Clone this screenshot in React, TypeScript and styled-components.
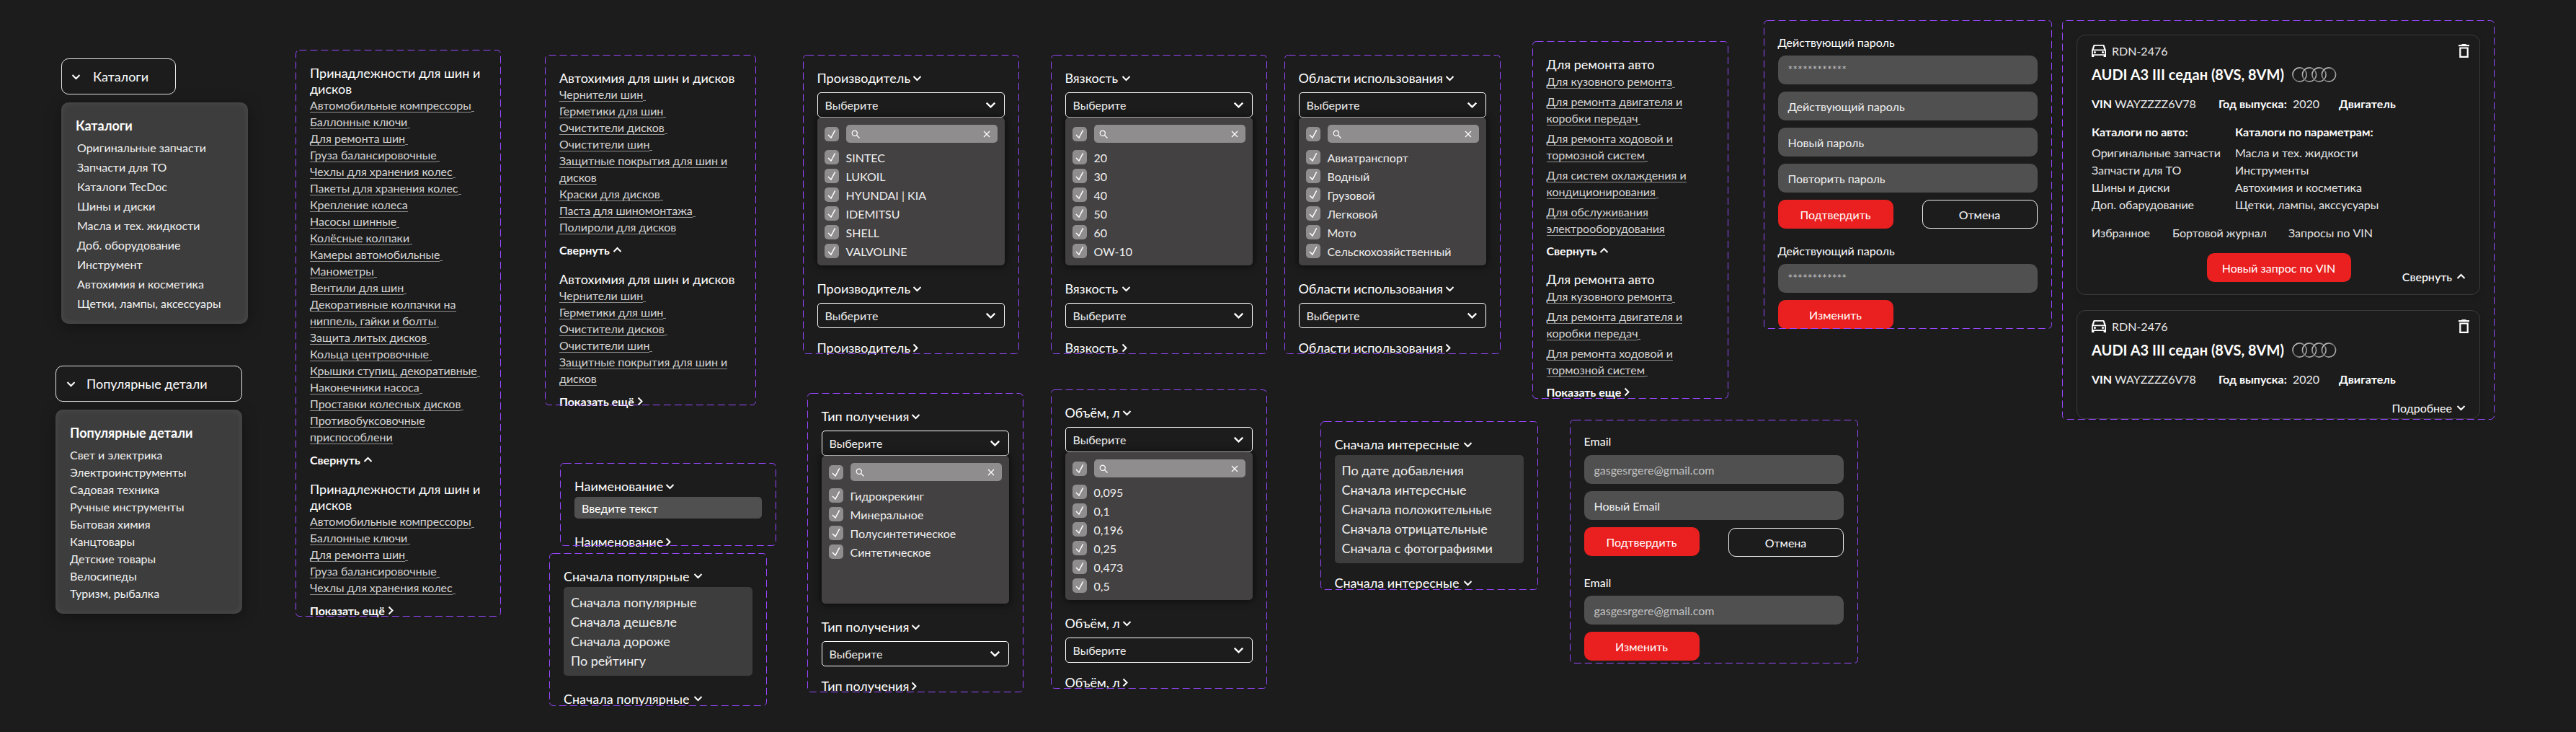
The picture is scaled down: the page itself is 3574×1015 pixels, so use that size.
import React from 'react';
import styled, { createGlobalStyle } from 'styled-components';

const GlobalStyle = createGlobalStyle`
  * { box-sizing: border-box; }
  html, body { margin: 0; padding: 0; background: #1c1c1c; }
  body {
    width: 3574px;
    height: 1015px;
    overflow: hidden;
    color: #fff;
    font-family: Lato, 'Open Sans', sans-serif;
    font-size: 16px;
  }
`;

const Board = styled.div`
  display: flex;
  align-items: flex-start;
  height: 1015px;
  padding-left: 77px;
`;

const Column = styled.div<{ $w: number }>`
  flex: none;
  width: ${(p) => p.$w}px;
  display: flex;
  flex-direction: column;
  align-items: flex-start;
`;

const Frame = styled.div<{ $w: number; $h: number; $top: number; $indent?: number; $padTop?: number }>`
  position: relative;
  flex: none;
  width: ${(p) => p.$w}px;
  height: ${(p) => p.$h}px;
  margin-top: ${(p) => p.$top}px;
  margin-left: ${(p) => p.$indent ?? 0}px;
  padding: ${(p) => p.$padTop ?? 21}px 20px 0;
`;

const Outline = styled.svg`
  position: absolute;
  inset: 0;
  width: 100%;
  height: 100%;
  pointer-events: none;
  overflow: visible;
`;

const OutlineRect = styled.rect`
  x: 0.5px;
  y: 0.5px;
  width: calc(100% - 1px);
  height: calc(100% - 1px);
  rx: 5px;
  fill: none;
  stroke: #9747ff;
  stroke-width: 1;
  stroke-dasharray: 10 5;
`;

const DashedFrame = (props: React.ComponentProps<typeof Frame>) => (
  <Frame {...props}>
    <Outline>
      <OutlineRect />
    </Outline>
    {props.children}
  </Frame>
);

const ChevronIcon = styled.svg<{ $size?: number }>`
  flex: none;
  width: ${(p) => p.$size ?? 13}px;
  height: ${(p) => p.$size ?? 13}px;
`;

const chevronPaths = {
  down: 'M1.5 4l5 5 5-5',
  up: 'M1.5 9l5-5 5 5',
  right: 'M1.5 1.5l5 5-5 5',
};

const Chevron = ({ dir = 'down', size }: { dir?: keyof typeof chevronPaths; size?: number }) => (
  <ChevronIcon viewBox="0 0 13 13" $size={size} fill="none" stroke="#fff" strokeWidth="2">
    <path d={chevronPaths[dir]} />
  </ChevronIcon>
);

/* Left column: catalog buttons and their menus */

const MenuButton = styled.div<{ $w: number; $indent?: number; $top: number; $gap: number; $pad: number }>`
  width: ${(p) => p.$w}px;
  height: 50px;
  margin-top: ${(p) => p.$top}px;
  margin-left: ${(p) => p.$indent ?? 0}px;
  padding-left: ${(p) => p.$pad}px;
  display: flex;
  align-items: center;
  gap: ${(p) => p.$gap}px;
  border: 1px solid #e4e4e4;
  border-radius: 10px;
  font-size: 18px;
`;

const MenuPanel = styled.div<{ $indent?: number; $padBottom: number }>`
  width: 259px;
  margin-top: 11px;
  margin-left: ${(p) => p.$indent ?? 0}px;
  padding: 21px 19px ${(p) => p.$padBottom}px 20px;
  border-radius: 10px;
  background: #3d3d3d;
  box-shadow: inset 0 0 10px rgba(255, 255, 255, 0.09), 0 4px 20px rgba(0, 0, 0, 0.35);
`;

const MenuTitle = styled.div<{ $mb: number }>`
  font-size: 18px;
  font-weight: 700;
  line-height: 22px;
  margin-bottom: ${(p) => p.$mb}px;
`;

const MenuItem = styled.div<{ $lh: number; $indent?: number }>`
  line-height: ${(p) => p.$lh}px;
  padding-left: ${(p) => p.$indent ?? 0}px;
  color: #f2f2f2;
  white-space: nowrap;
`;

/* Link lists */

const GroupTitle = styled.div<{ $mb?: number }>`
  font-size: 18px;
  line-height: 22px;
  margin-bottom: ${(p) => p.$mb ?? 0}px;
`;

const LinkRow = styled.div<{ $tail: boolean; $gap?: number }>`
  line-height: 23px;
  margin-bottom: ${(p) => p.$gap ?? 0}px;
  color: #d4d4d4;

  ${(p) =>
    p.$tail &&
    `&::after {
      content: '';
      display: inline-block;
      width: 4px;
      height: 1px;
      background: #8f8f8f;
      vertical-align: -3px;
    }`}
`;

const LinkText = styled.span`
  border-bottom: 1px solid #8f8f8f;
`;

const Toggle = styled.div<{ $top: number; $after?: number }>`
  display: flex;
  align-items: center;
  gap: 4px;
  height: 20px;
  margin-top: ${(p) => p.$top}px;
  margin-bottom: ${(p) => p.$after ?? 0}px;
  font-weight: 700;
  white-space: nowrap;
`;

const noTail = new Set([
  'Крепление колеса',
  'Противобуксовочные приспособлени',
  'Полироли для дисков',
  'Защитные покрытия для шин и дисков',
  'Для обслуживания электрооборудования',
]);

const LinkGroup = ({ title, links, gap, toggle }: { title: string; links: string[]; gap?: number; toggle: 'up' | 'more' | 'moreAlt' }) => (
  <>
    <GroupTitle $mb={gap ? 1 : 0}>{title}</GroupTitle>
    {links.map((link, i) => (
      <LinkRow key={i} $tail={!noTail.has(link)} $gap={gap}>
        <LinkText>{link}</LinkText>
      </LinkRow>
    ))}
    {toggle === 'up' ? (
      <Toggle $after={gap ? 19 : 20} $top={gap ? 9 : 10}>
        Свернуть <Chevron dir="up" />
      </Toggle>
    ) : (
      <Toggle $top={gap ? 9 : 10}>
        {toggle === 'more' ? 'Показать ещё' : 'Показать еще'} <Chevron dir="right" />
      </Toggle>
    )}
  </>
);

/* Filter fields */

const FieldLabel = styled.div<{ $top?: number; $gap?: number; $mb?: number }>`
  display: flex;
  align-items: center;
  gap: ${(p) => p.$gap ?? 3}px;
  height: 22px;
  margin-top: ${(p) => p.$top ?? 0}px;
  margin-bottom: ${(p) => p.$mb ?? 0}px;
  font-size: 18px;
  white-space: nowrap;
`;

const SelectBox = styled.div`
  display: flex;
  align-items: center;
  justify-content: space-between;
  width: 260px;
  height: 35px;
  padding: 0 11px 0 10px;
  border: 1px solid #fff;
  border-radius: 5px;
  color: #eee;
`;

const Dropdown = styled.div`
  width: 260px;
  height: 205px;
  padding: 10px;
  border-radius: 5px;
  background: #434142;
  box-shadow: 0 0 12px rgba(0, 0, 0, 0.75);
`;

const SearchRow = styled.div`
  display: flex;
  align-items: center;
  gap: 10px;
  margin-bottom: 10px;
`;

const SearchField = styled.div`
  flex: 1;
  height: 25px;
  display: flex;
  align-items: center;
  justify-content: space-between;
  padding: 0 10px 0 7px;
  border-radius: 5px;
  background: #8f8d8e;
`;

const CheckBox = styled.div`
  flex: none;
  width: 20px;
  height: 20px;
  border-radius: 5px;
  background: #8f8d8e;
  display: flex;
`;

const OptionRow = styled.div`
  display: flex;
  align-items: center;
  gap: 10px;
  height: 20px;
  margin-bottom: 6px;
  color: #f0f0f0;
  white-space: nowrap;
`;

const Check = () => (
  <CheckBox>
    <svg viewBox="0 0 20 20" width="20" height="20" fill="none" stroke="#fff" strokeWidth="1.5">
      <path d="M5 11l4 4 5.7-10.7" />
    </svg>
  </CheckBox>
);

const SelectFrame = ({ title, options, top, gap, indent }: { title: string; options: string[]; top: number; gap?: number; indent?: number }) => (
  <DashedFrame $w={300} $h={415} $top={top} $indent={indent}>
    <FieldLabel $gap={gap} $mb={9}>
      {title} <Chevron />
    </FieldLabel>
    <SelectBox>
      Выберите <Chevron size={15} />
    </SelectBox>
    <Dropdown>
      <SearchRow>
        <Check />
        <SearchField>
          <svg viewBox="0 0 12 12" width="12" height="12" fill="none" stroke="#fff" strokeWidth="1.2">
            <circle cx="4.8" cy="4.8" r="3.6" />
            <path d="M7.5 7.5l4 4" />
          </svg>
          <svg viewBox="0 0 10 10" width="10" height="10" fill="none" stroke="#fff" strokeWidth="1.3">
            <path d="M1 1l8 8M9 1l-8 8" />
          </svg>
        </SearchField>
      </SearchRow>
      {options.map((o) => (
        <OptionRow key={o}>
          <Check />
          {o}
        </OptionRow>
      ))}
    </Dropdown>
    <FieldLabel $top={21} $gap={gap} $mb={9}>
      {title} <Chevron />
    </FieldLabel>
    <SelectBox>
      Выберите <Chevron size={15} />
    </SelectBox>
    <FieldLabel $top={16} $gap={gap}>
      {title} <Chevron dir="right" />
    </FieldLabel>
  </DashedFrame>
);

const TextInput = styled.div`
  height: 30px;
  width: 260px;
  margin-top: 4px;
  padding: 0 10px;
  display: flex;
  align-items: center;
  border-radius: 5px;
  background: #505050;
`;

const SortPanel = styled.div`
  width: 262px;
  margin-top: 4px;
  padding: 8px 10px 7px;
  border-radius: 5px;
  background: #3d3d3d;
`;

const SortItem = styled.div`
  font-size: 18px;
  line-height: 27px;
  color: #f0f0f0;
  white-space: nowrap;
`;

/* Password and email forms */

const FormLabel = styled.div<{ $top?: number; $mb: number }>`
  line-height: 20px;
  margin-top: ${(p) => p.$top ?? 0}px;
  margin-bottom: ${(p) => p.$mb}px;
`;

const FormInput = styled.div<{ $muted?: boolean; $stars?: boolean }>`
  height: 40px;
  margin-bottom: 10px;
  padding: 0 14px;
  display: flex;
  align-items: ${(p) => (p.$stars ? 'flex-start' : 'center')};
  padding-top: ${(p) => (p.$stars ? '9px' : '0')};
  border-radius: 10px;
  background: #505050;
  color: ${(p) => (p.$muted ? '#c2c2c2' : '#f0f0f0')};
`;

const ButtonRow = styled.div`
  display: flex;
  justify-content: space-between;
  align-items: flex-start;
`;

const RedButton = styled.div<{ $w?: number }>`
  width: ${(p) => p.$w ?? 160}px;
  height: 40px;
  display: flex;
  align-items: center;
  justify-content: center;
  border-radius: 10px;
  background: #ea2020;
`;

const GhostButton = styled.div<{ $drop?: number }>`
  width: 160px;
  height: 40px;
  margin-top: ${(p) => p.$drop ?? 0}px;
  display: flex;
  align-items: center;
  justify-content: center;
  border: 1px solid #f0f0f0;
  border-radius: 10px;
`;

/* VIN cards */

const Card = styled.div<{ $h?: number; $mt?: number }>`
  height: ${(p) => p.$h}px;
  margin-top: ${(p) => p.$mt ?? 0}px;
  padding: 9px 14px 0 20px;
  border: 1px solid #3a3a3a;
  border-radius: 12px;
  box-shadow: 0 4px 10px rgba(0, 0, 0, 0.12);
`;

const CardHead = styled.div`
  display: flex;
  align-items: center;
  justify-content: space-between;
  height: 24px;
`;

const PlateRow = styled.div`
  display: flex;
  align-items: center;
  gap: 8px;
  color: #e8e8e8;
`;

const TitleRow = styled.div`
  display: flex;
  align-items: center;
  gap: 11px;
  height: 24px;
  margin-top: 9px;
  font-size: 20px;
  font-weight: 700;
`;

const VinRow = styled.div`
  display: flex;
  margin-top: 19px;
  line-height: 20px;
  white-space: nowrap;
`;

const VinCell = styled.div<{ $w: number }>`
  width: ${(p) => p.$w}px;
  flex: none;
  color: #ececec;

  b {
    color: #fff;
  }
`;

const CatalogGrid = styled.div`
  display: grid;
  grid-template-columns: 199px 1fr;
  margin-top: 19px;
`;

const CatalogHead = styled.div`
  font-weight: 700;
  line-height: 20px;
  margin-bottom: 7px;
`;

const CatalogItem = styled.div`
  line-height: 24px;
  color: #e6e6e6;
`;

const ShortcutRow = styled.div`
  display: flex;
  margin-top: 17px;
  line-height: 20px;
  color: #e6e6e6;
`;

const Shortcut = styled.div<{ $w?: number }>`
  width: ${(p) => (p.$w ? `${p.$w}px` : 'auto')};
`;

const CardFooter = styled.div`
  display: grid;
  grid-template-columns: 1fr auto 1fr;
  margin-top: 18px;
  margin-right: 5px;
`;

const FooterButton = styled(RedButton)`
  grid-column: 2;
`;

const CardToggle = styled.div<{ $bold?: boolean; $top?: number }>`
  grid-column: 3;
  justify-self: end;
  align-self: end;
  display: flex;
  align-items: center;
  justify-content: flex-end;
  gap: 6px;
  height: 16px;
  margin-top: ${(p) => p.$top ?? 0}px;
  font-weight: ${(p) => (p.$bold ? 500 : 400)};
  white-space: nowrap;
`;

const CarIcon = () => (
  <svg viewBox="0 0 19 16" width="20" height="17" fill="#fff">
    <path
      fillRule="evenodd"
      d="M3.6 0h11.8c.7 0 1.3.4 1.5 1.1L19 7.2V16h-3.2v-1.8H3.2V16H0V7.2l2.1-6.1C2.3.4 2.9 0 3.6 0zm.4 1.7L2.6 6h13.8L15 1.7H4zM1.7 7.7v4.8h15.6V7.7H1.7zM4.2 8.4a1.5 1.5 0 110 3 1.5 1.5 0 010-3zm10.6 0a1.5 1.5 0 110 3 1.5 1.5 0 010-3z"
    />
  </svg>
);

const TrashIcon = () => (
  <svg viewBox="0 0 15 19" width="15" height="19" fill="#fff">
    <path
      fillRule="evenodd"
      d="M5 0h5l1 1h4v2.2H0V1h4L5 0zM1.2 4.4h12.6V19H1.2V4.4zm2.2 2.2v10.2h8.2V6.6H3.4z"
    />
  </svg>
);

const AudiRings = () => (
  <svg viewBox="0 0 62 21" width="62" height="21" fill="none" strokeWidth="1.6">
    <defs>
      <linearGradient id="ring" x1="0" y1="0" x2="1" y2="1">
        <stop offset="0" stopColor="#e8e8e8" />
        <stop offset="0.5" stopColor="#6c6c6c" />
        <stop offset="1" stopColor="#d8d8d8" />
      </linearGradient>
    </defs>
    {[10.5, 24, 37.5, 51].map((cx) => (
      <circle key={cx} cx={cx} cy="10.5" r="9.6" stroke="url(#ring)" />
    ))}
  </svg>
);

const CardTop = () => (
  <>
    <CardHead>
      <PlateRow>
        <CarIcon />
        RDN-2476
      </PlateRow>
      <TrashIcon />
    </CardHead>
    <TitleRow>
      AUDI A3 III седан (8VS, 8VM) <AudiRings />
    </TitleRow>
    <VinRow>
      <VinCell $w={176}>
        <b>VIN</b> WAYZZZZ6V78
      </VinCell>
      <VinCell $w={167}>
        <b>Год выпуска:</b>&nbsp; 2020
      </VinCell>
      <VinCell $w={100}>
        <b>Двигатель</b>
      </VinCell>
    </VinRow>
  </>
);

const tireLinks = [
  'Автомобильные компрессоры',
  'Баллонные ключи',
  'Для ремонта шин',
  'Груза балансировочные',
  'Чехлы для хранения колес',
];

const tireLinksFull = [
  ...tireLinks,
  'Пакеты для хранения колес',
  'Крепление колеса',
  'Насосы шинные',
  'Колёсные колпаки',
  'Камеры автомобильные',
  'Манометры',
  'Вентили для шин',
  'Декоративные колпачки на ниппель, гайки и болты',
  'Защита литых дисков',
  'Кольца центровочные',
  'Крышки ступиц, декоративные',
  'Наконечники насоса',
  'Проставки колесных дисков',
  'Противобуксовочные приспособлени',
];

const chemLinks = [
  'Чернители шин',
  'Герметики для шин',
  'Очистители дисков',
  'Очистители шин',
  'Защитные покрытия для шин и дисков',
];

const repairLinks = [
  'Для кузовного ремонта',
  'Для ремонта двигателя и коробки передач',
  'Для ремонта ходовой и тормозной систем',
];

const catalogItems = [
  'Оригинальные запчасти',
  'Запчасти для ТО',
  'Каталоги TecDoc',
  'Шины и диски',
  'Масла и тех. жидкости',
  'Доб. оборудование',
  'Инструмент',
  'Автохимия и косметика',
  'Щетки, лампы, аксессуары',
];

const popularItems = [
  'Свет и электрика',
  'Электроинструменты',
  'Садовая техника',
  'Ручные инструменты',
  'Бытовая химия',
  'Канцтовары',
  'Детские товары',
  'Велосипеды',
  'Туризм, рыбалка',
];

const App = () => (
  <>
    <GlobalStyle />
    <Board>
      <Column $w={333}>
        <MenuButton $w={159} $indent={8} $top={81} $gap={17} $pad={13}>
          <Chevron />
          Каталоги
        </MenuButton>
        <MenuPanel $indent={8} $padBottom={15}>
          <MenuTitle $mb={6}>Каталоги</MenuTitle>
          {catalogItems.map((item) => (
            <MenuItem key={item} $lh={27} $indent={2}>
              {item}
            </MenuItem>
          ))}
        </MenuPanel>
        <MenuButton $w={259} $top={58} $gap={15} $pad={14}>
          <Chevron />
          Популярные детали
        </MenuButton>
        <MenuPanel $padBottom={16}>
          <MenuTitle $mb={8}>Популярные детали</MenuTitle>
          {popularItems.map((item) => (
            <MenuItem key={item} $lh={24}>
              {item}
            </MenuItem>
          ))}
        </MenuPanel>
      </Column>

      <Column $w={346}>
        <DashedFrame $w={285} $h={786} $top={69}>
          <LinkGroup title="Принадлежности для шин и дисков" links={tireLinksFull} toggle="up" />
          <LinkGroup title="Принадлежности для шин и дисков" links={tireLinks} toggle="more" />
        </DashedFrame>
      </Column>

      <Column $w={357.5}>
        <DashedFrame $w={293} $h={486} $top={76}>
          <LinkGroup
            title="Автохимия для шин и дисков"
            links={[...chemLinks, 'Краски для дисков', 'Паста для шиномонтажа', 'Полироли для дисков']}
            toggle="up"
          />
          <LinkGroup title="Автохимия для шин и дисков" links={chemLinks} toggle="more" />
        </DashedFrame>
        <DashedFrame $w={300} $h={115} $top={80} $indent={21}>
          <FieldLabel>
            Наименование <Chevron />
          </FieldLabel>
          <TextInput>Введите текст</TextInput>
          <FieldLabel $top={21}>
            Наименование <Chevron dir="right" />
          </FieldLabel>
        </DashedFrame>
        <DashedFrame $w={302} $h={212} $top={9.5} $indent={6}>
          <FieldLabel $gap={6}>
            Сначала популярные <Chevron />
          </FieldLabel>
          <SortPanel>
            {['Сначала популярные', 'Сначала дешевле', 'Сначала дороже', 'По рейтингу'].map((s) => (
              <SortItem key={s}>{s}</SortItem>
            ))}
          </SortPanel>
          <FieldLabel $top={21} $gap={6}>
            Сначала популярные <Chevron />
          </FieldLabel>
        </DashedFrame>
      </Column>

      <Column $w={344}>
        <SelectFrame
          title="Производитель"
          top={76}
          options={['SINTEC', 'LUKOIL', 'HYUNDAI | KIA', 'IDEMITSU', 'SHELL', 'VALVOLINE']}
        />
        <SelectFrame
          title="Тип получения"
          top={54}
          indent={6}
          options={['Гидрокрекинг', 'Минеральное', 'Полусинтетическое', 'Синтетическое']}
        />
      </Column>

      <Column $w={324}>
        <SelectFrame title="Вязкость" top={76} gap={5} options={['20', '30', '40', '50', '60', 'OW-10']} />
        <SelectFrame
          title="Объём, л"
          top={49}
          options={['0,095', '0,1', '0,196', '0,25', '0,473', '0,5']}
        />
      </Column>

      <Column $w={344}>
        <SelectFrame
          title="Области использования"
          top={76}
          options={['Авиатранспорт', 'Водный', 'Грузовой', 'Легковой', 'Мото', 'Сельскохозяйственный']}
        />
        <DashedFrame $w={302} $h={234} $top={93} $indent={50}>
          <FieldLabel $gap={6}>
            Сначала интересные <Chevron />
          </FieldLabel>
          <SortPanel>
            {['По дате добавления', 'Сначала интересные', 'Сначала положительные', 'Сначала отрицательные', 'Сначала с фотографиями'].map(
              (s) => (
                <SortItem key={s}>{s}</SortItem>
              ),
            )}
          </SortPanel>
          <FieldLabel $top={16} $gap={6}>
            Сначала интересные <Chevron />
          </FieldLabel>
        </DashedFrame>
      </Column>

      <Column $w={321}>
        <DashedFrame $w={272} $h={496} $top={57}>
          <LinkGroup
            title="Для ремонта авто"
            gap={5}
            links={[...repairLinks, 'Для систем охлаждения и кондиционирования', 'Для обслуживания электрооборудования']}
            toggle="up"
          />
          <LinkGroup title="Для ремонта авто" gap={5} links={repairLinks} toggle="moreAlt" />
        </DashedFrame>
        <DashedFrame $w={400} $h={338} $top={29} $indent={52} $padTop={20}>
          <FormLabel $mb={9}>Email</FormLabel>
          <FormInput $muted>gasgesrgere@gmail.com</FormInput>
          <FormInput>Новый Email</FormInput>
          <ButtonRow>
            <RedButton>Подтвердить</RedButton>
            <GhostButton $drop={1}>Отмена</GhostButton>
          </ButtonRow>
          <FormLabel $top={26} $mb={8}>
            Email
          </FormLabel>
          <FormInput $muted>gasgesrgere@gmail.com</FormInput>
          <RedButton>Изменить</RedButton>
        </DashedFrame>
      </Column>

      <Column $w={414.5}>
        <DashedFrame $w={400} $h={428} $top={28}>
          <FormLabel $mb={8}>Действующий пароль</FormLabel>
          <FormInput $muted $stars>
            ************
          </FormInput>
          <FormInput>Действующий пароль</FormInput>
          <FormInput>Новый пароль</FormInput>
          <FormInput>Повторить пароль</FormInput>
          <ButtonRow>
            <RedButton>Подтвердить</RedButton>
            <GhostButton>Отмена</GhostButton>
          </ButtonRow>
          <FormLabel $top={21} $mb={8}>
            Действующий пароль
          </FormLabel>
          <FormInput $muted $stars>
            ************
          </FormInput>
          <RedButton>Изменить</RedButton>
        </DashedFrame>
      </Column>

      <Column $w={600}>
        <DashedFrame $w={600} $h={554} $top={28} $padTop={20}>
          <Card $h={361}>
            <CardTop />
            <CatalogGrid>
              <div>
                <CatalogHead>Каталоги по авто:</CatalogHead>
                {['Оригинальные запчасти', 'Запчасти для ТО', 'Шины и диски', 'Доп. обарудование'].map((s) => (
                  <CatalogItem key={s}>{s}</CatalogItem>
                ))}
              </div>
              <div>
                <CatalogHead>Каталоги по параметрам:</CatalogHead>
                {['Масла и тех. жидкости', 'Инструменты', 'Автохимия и косметика', 'Щетки, лампы, акссусуары'].map((s) => (
                  <CatalogItem key={s}>{s}</CatalogItem>
                ))}
              </div>
            </CatalogGrid>
            <ShortcutRow>
              <Shortcut $w={112}>Избранное</Shortcut>
              <Shortcut $w={161}>Бортовой журнал</Shortcut>
              <Shortcut>Запросы по VIN</Shortcut>
            </ShortcutRow>
            <CardFooter>
              <FooterButton $w={200}>Новый запрос по VIN</FooterButton>
              <CardToggle $bold>
                Свернуть <Chevron dir="up" />
              </CardToggle>
            </CardFooter>
          </Card>
          <Card $h={151} $mt={21}>
            <CardTop />
            <CardFooter>
              <CardToggle $top={3}>
                Подробнее <Chevron />
              </CardToggle>
            </CardFooter>
          </Card>
        </DashedFrame>
      </Column>
    </Board>
  </>
);

export default App;
